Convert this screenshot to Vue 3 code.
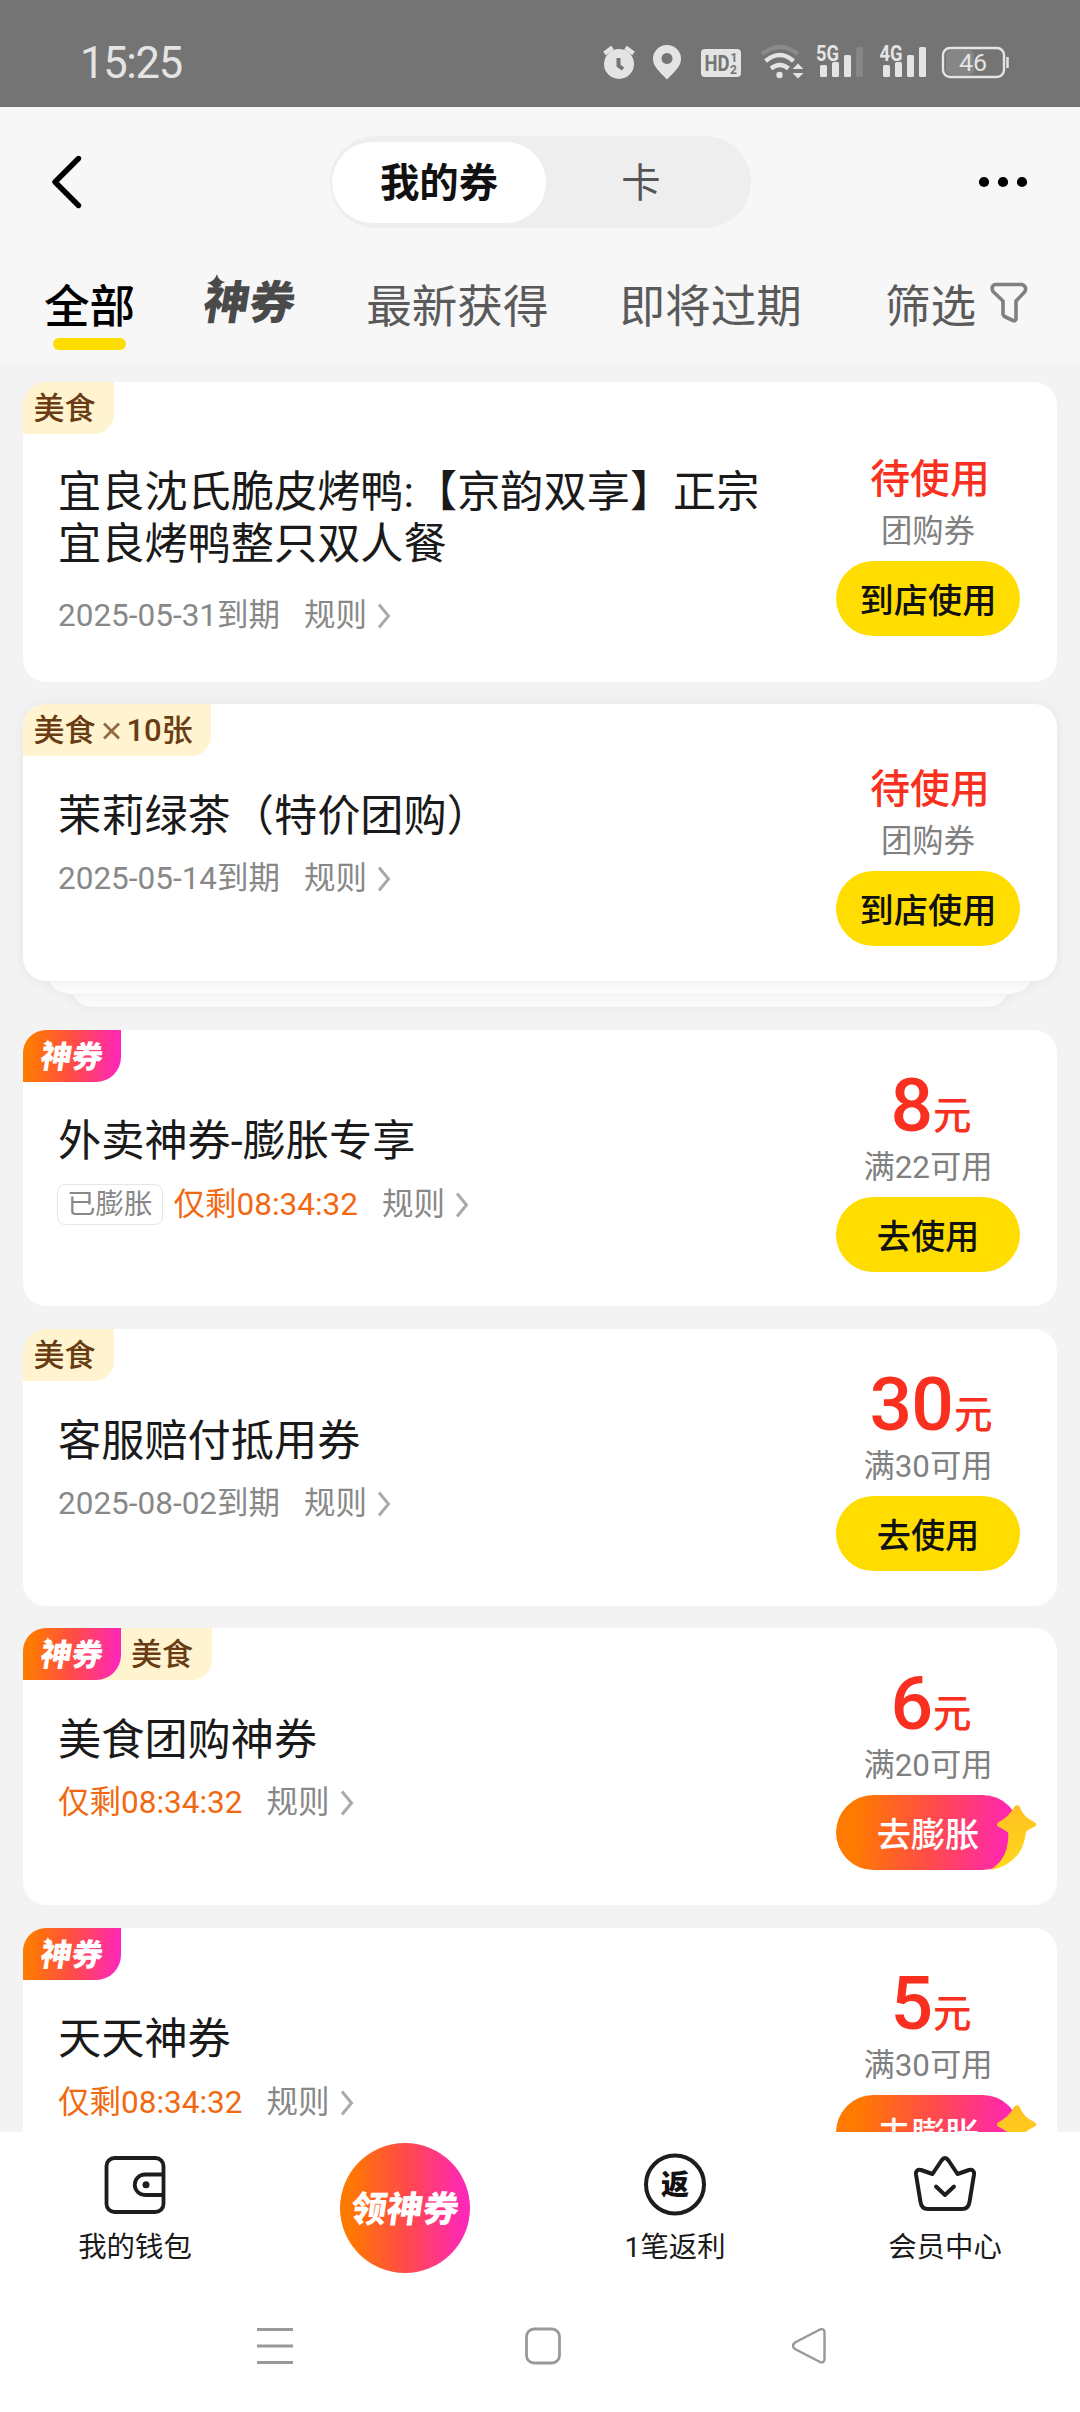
<script setup>
const coupons = [
  {
    tags: [{ text: '美食' }],
    title: '宜良沈氏脆皮烤鸭:【京韵双享】正宗宜良烤鸭整只双人餐',
    date: '2025-05-31到期',
    status: '待使用',
    note: '团购券',
    action: '到店使用',
    tall: true,
  },
  {
    tags: [{ text: '美食', count: '10张' }],
    title: '茉莉绿茶（特价团购）',
    date: '2025-05-14到期',
    status: '待使用',
    note: '团购券',
    action: '到店使用',
    stacked: true,
  },
  {
    tags: [{ brand: true }],
    title: '外卖神券-膨胀专享',
    badge: '已膨胀',
    countdown: '仅剩08:34:32',
    price: '8',
    note: '满22可用',
    action: '去使用',
  },
  {
    tags: [{ text: '美食' }],
    title: '客服赔付抵用券',
    date: '2025-08-02到期',
    price: '30',
    note: '满30可用',
    action: '去使用',
  },
  {
    tags: [{ brand: true }, { text: '美食' }],
    title: '美食团购神券',
    countdown: '仅剩08:34:32',
    price: '6',
    note: '满20可用',
    action: '去膨胀',
    boost: true,
  },
  {
    tags: [{ brand: true }],
    title: '天天神券',
    countdown: '仅剩08:34:32',
    price: '5',
    note: '满30可用',
    action: '去膨胀',
    boost: true,
  },
]
</script>

<template>
  <div class="screen">
    <div class="status">
      <span class="time">15:25</span>
      <svg class="status-icons" width="420" height="60" viewBox="600 32 420 60">
        <g fill="#e4e4e4">
          <circle cx="619" cy="64" r="15" />
          <path d="M604.500 53.500 L612.500 47.500 M633.500 53.500 L625.500 47.500" stroke="#e4e4e4" stroke-width="4.500" />
          <path d="M618.500 58 V65.500 L623 69" fill="none" stroke="#747474" stroke-width="4" />
          <path fill-rule="evenodd" d="M667 45 a14 14 0 0 1 14 14 c0 8 -8 14 -14 20.500 c-6 -6.500 -14 -12.500 -14 -20.500 a14 14 0 0 1 14 -14 Z M667 53 a5.500 5.500 0 1 0 .01 0 Z" />
          <rect x="701" y="49" width="40" height="28" rx="4" />
        </g>
        <g fill="#747474" font-weight="700">
          <text x="704.500" y="70.500" font-size="22" textLength="25" lengthAdjust="spacingAndGlyphs">HD</text>
          <text x="730.500" y="61.500" font-size="12">1</text>
          <text x="730" y="73.500" font-size="12">2</text>
        </g>
        <g fill="none" stroke-width="4.500">
          <path d="M762 54 Q780 40 798 54" stroke="#8a8a8a" />
          <path d="M765.500 61 Q780 49 793.500 61" stroke="#e4e4e4" />
          <path d="M771 68.500 Q780 61.500 788.500 68.500" stroke="#e4e4e4" />
        </g>
        <g fill="#e4e4e4">
          <circle cx="779.500" cy="75" r="3.200" />
          <path d="M792.500 69 L798 63.500 L803.500 69 Z M792.500 73 L798 78.500 L803.500 73 Z" />
          <rect x="820" y="65" width="7" height="12" rx="1.500" />
          <rect x="832" y="62" width="7" height="15" rx="1.500" />
          <rect x="844" y="55" width="7" height="22" rx="1.500" />
          <rect x="856" y="47" width="7" height="30" rx="1.500" fill="#868686" />
          <rect x="883" y="65" width="7" height="12" rx="1.500" />
          <rect x="895" y="62" width="7" height="15" rx="1.500" />
          <rect x="907" y="55" width="7" height="22" rx="1.500" />
          <rect x="919" y="47" width="7" height="30" rx="1.500" />
        </g>
        <g fill="#e4e4e4" font-weight="700" font-size="22" stroke="#747474" stroke-width="2" paint-order="stroke">
          <text x="816" y="61" textLength="23" lengthAdjust="spacingAndGlyphs">5G</text>
          <text x="879.500" y="61" textLength="23" lengthAdjust="spacingAndGlyphs">4G</text>
        </g>
        <rect x="946" y="50" width="28" height="25" rx="5" fill="#868686" />
        <rect x="943" y="48" width="61" height="29" rx="7" fill="none" stroke="#e4e4e4" stroke-width="2.400" />
        <path d="M1007.500 57 V68" stroke="#e4e4e4" stroke-width="2.500" />
        <text x="959" y="71.300" font-size="23.500" fill="#e4e4e4" textLength="28" lengthAdjust="spacingAndGlyphs">46</text>
      </svg>
    </div>

    <header class="header">
      <div class="bar">
        <svg class="back" width="36" height="60" viewBox="0 0 36 60">
          <path d="M29.500 6.500 L6 30 L29.500 53.500" fill="none" stroke="#000" stroke-width="5.400" stroke-linecap="round" stroke-linejoin="round" />
        </svg>
        <div class="segment">
          <span class="seg on">我的券</span>
          <span class="seg off">卡</span>
        </div>
        <svg class="more" width="52" height="12" viewBox="0 0 52 12">
          <circle cx="7" cy="6" r="5.100" /><circle cx="26" cy="6" r="5.100" /><circle cx="45" cy="6" r="5.100" />
        </svg>
      </div>
      <nav class="tabs">
        <span class="tab active">全部</span>
        <span class="tab brand"><i class="art">神券</i>
          <svg class="spark" width="18" height="18" viewBox="0 0 18 18"><path d="M10 0 Q11 6.500 18 8 Q11 10 9 18 Q7 11 0 9 Q8 7 10 0 Z" fill="#4a4a4a" /></svg>
        </span>
        <span class="tab">最新获得</span>
        <span class="tab expiring">即将过期</span>
        <span class="tab filter">筛选</span>
        <svg class="funnel" width="38" height="42" viewBox="0 0 38 42">
          <path d="M5 2.500 H32 Q37 4 35 9.500 L26 19 V37 Q25.500 39.500 23 38.500 L14.500 34.500 Q13 33.500 13 32 V19 L3 9.500 Q0.500 4 5 2.500 Z" fill="none" stroke="#808080" stroke-width="3.600" stroke-linejoin="round" />
        </svg>
      </nav>
    </header>

    <main class="list">
      <div v-for="(c, i) in coupons" :key="i" class="slot" :class="{ stacked: c.stacked }">
        <article class="card" :class="{ tall: c.tall }">
          <div class="tags">
            <template v-for="(t, j) in c.tags" :key="j">
              <span v-if="t.brand" class="tag-brand"><i class="art">神券</i>
                <svg class="spark" width="9" height="9" viewBox="0 0 18 18"><path d="M10 0 Q11 6.500 18 8 Q11 10 9 18 Q7 11 0 9 Q8 7 10 0 Z" fill="#fff" /></svg>
              </span>
              <span v-else class="tag" :class="{ joined: j > 0 }">{{ t.text }}<template v-if="t.count"><svg class="times" width="17" height="18" viewBox="0 0 17 18"><path d="M1 1.500 L16 16.500 M16 1.500 L1 16.500" stroke="#926b45" stroke-width="2.800" /></svg>{{ t.count }}</template></span>
            </template>
          </div>
          <div class="info">
            <h3 class="title">{{ c.title }}</h3>
            <div class="meta">
              <span v-if="c.badge" class="badge">{{ c.badge }}</span>
              <span v-if="c.date">{{ c.date }}</span>
              <span v-if="c.countdown" class="countdown">{{ c.countdown }}</span>
              <span class="rule">规则</span>
              <svg class="chev" width="14" height="28" viewBox="0 0 14 28"><path d="M2 2.500 L11.500 14 L2 25.500" fill="none" stroke="#aaa" stroke-width="3" /></svg>
            </div>
          </div>
          <div class="side">
            <div v-if="c.price" class="price"><b>{{ c.price }}</b><span>元</span></div>
            <div v-else class="state">{{ c.status }}</div>
            <div class="note">{{ c.note }}</div>
            <div class="btn" :class="{ boost: c.boost }">
              {{ c.action }}
              <svg v-if="c.boost" class="arrow" width="50" height="68" viewBox="0 0 50 68">
                <defs>
                  <linearGradient id="gold" x1="0" y1="0" x2="0" y2="1">
                    <stop offset="0" stop-color="#ffc021" /><stop offset="1" stop-color="#ffd91c" />
                  </linearGradient>
                </defs>
                <path d="M25.500 3.500 Q28 1 30.500 3.500 Q34 14 46 19.500 Q48.500 21.500 46 23.500 Q39 26.500 37 29 Q35 43 30 50 Q20 64 1 67.200 Q14 59 17.500 46 Q20 36 19 29.500 Q16 27 9 23.500 Q7 21.500 9 19.500 Q20 14 25.500 3.500 Z" fill="url(#gold)" />
              </svg>
            </div>
          </div>
        </article>
      </div>
    </main>

    <footer class="dock">
      <div class="item">
        <svg width="70" height="66" viewBox="0 0 70 66">
          <g fill="none" stroke="#1d1d1d" stroke-width="3.800">
            <rect x="6.500" y="6" width="57" height="54" rx="8" />
            <path d="M63 22.500 H45 a10 10 0 0 0 0 20.500 H63" />
          </g>
          <circle cx="46" cy="32.700" r="3.500" fill="#1d1d1d" />
        </svg>
        <span>我的钱包</span>
      </div>
      <div class="item center"><div class="orb"><i class="art">领神券</i></div></div>
      <div class="item">
        <svg width="70" height="66" viewBox="0 0 70 66">
          <circle cx="35" cy="32.500" r="29" fill="none" stroke="#1d1d1d" stroke-width="4" />
          <text x="35" y="43" text-anchor="middle" font-size="28" font-weight="900" fill="#111">返</text>
        </svg>
        <span>1笔返利</span>
      </div>
      <div class="item">
        <svg width="70" height="66" viewBox="0 0 70 66">
          <g fill="none" stroke="#1d1d1d" stroke-width="4" stroke-linejoin="round" stroke-linecap="round">
            <path d="M22.500 22 L31.500 8.500 Q35 3.500 38.500 8.500 L47.500 22 L59 18 Q64.500 17 64 22.500 L59.500 50 Q58.500 57 52 57 H18 Q11.500 57 10.500 50 L6 22.500 Q5.500 17 11 18 Z" />
            <path d="M26 34.500 L35 43 L44 34.500" />
          </g>
        </svg>
        <span>会员中心</span>
      </div>
    </footer>

    <div class="sysnav">
      <svg width="1080" height="60" viewBox="0 0 1080 60" fill="none" stroke="#999" stroke-width="2.800">
        <path d="M257 13.500 H293 M257 30 H293 M257 46.500 H293" />
        <rect x="526.500" y="13" width="33" height="34" rx="7.500" />
        <path d="M820 13.500 L795 26.500 Q791 29.700 795 33 L820 46 Q824.500 47.500 824.500 43 V16.500 Q824.500 12 820 13.500 Z" stroke-width="2.400" />
      </svg>
    </div>
  </div>
</template>

<style>
body { margin: 0; background: #fff; }
</style>

<style scoped>
.screen {
  width: 1080px;
  height: 2412px;
  overflow: hidden;
  display: flex;
  flex-direction: column;
  background: #fff;
  font-family: Roboto, "Noto Sans CJK SC", sans-serif;
  color: #1a1a1a;
}
.status {
  height: 107px;
  background: #747474;
  flex: none;
  display: flex;
  justify-content: space-between;
  align-items: center;
  padding: 17px 60px 0 80px;
  box-sizing: border-box;
}
.time { font-size: 43.5px; letter-spacing: -1.3px; color: #e4e4e4; line-height: 60px; padding-top: 3px; }
.status-icons { display: block; }
.header { height: 257px; flex: none; background: #f7f7f7; }
.bar {
  height: 92px;
  padding: 29px 51px 0 49px;
  display: flex;
  align-items: center;
}
.back { margin-right: 245px; }
.segment {
  width: 421px;
  height: 92px;
  border-radius: 46px;
  background: #eee;
  display: flex;
  align-items: center;
  padding-left: 2px;
  box-sizing: border-box;
}
.seg { height: 81px; line-height: 84px; font-size: 39.4px; text-align: center; }
.seg.on { width: 214px; border-radius: 41px; background: #fff; font-weight: 700; color: #111; }
.seg.off { width: 190px; color: #555; }
.more { margin-left: auto; }
.tabs {
  display: flex;
  align-items: flex-start;
  padding: 47px 0 0 44px;
  font-size: 45.6px;
  line-height: 66px;
  color: #5a5a5a;
}
.tab { flex: none; position: relative; }
.tab.active { color: #000; font-weight: 500; margin-right: 69px; }
.tab.active::after {
  content: "";
  position: absolute;
  left: 9px;
  top: 63px;
  width: 73px;
  height: 12px;
  border-radius: 6px;
  background: #fd0;
}
.art { display: inline-block; font-style: normal; font-weight: 900; transform: skewX(-9deg); }
.tab + .tab { margin-right: 71px; }
.tab.brand { color: #4a4a4a; width: 92px; margin: -4px 70px 0 0; }
.tab.expiring { margin-right: 83px; }
.tab.filter { margin-right: 14px; }
.spark { position: absolute; left: 3px; top: 3px; }
.funnel { margin-top: 7px; }
.list {
  height: 1768px;
  flex: none;
  overflow: hidden;
  box-sizing: border-box;
  background: #f3f3f3;
  padding: 18px 23px 0;
}
.slot { margin-bottom: 22.6px; }
.slot.stacked { position: relative; z-index: 0; padding-bottom: 26px; }
.stacked::before,
.stacked::after {
  content: "";
  position: absolute;
  border-radius: 23px;
  background: #fbfbfb;
  box-shadow: 0 0 14px rgba(0, 0, 0, 0.06);
}
.stacked::before { z-index: -1; left: 24px; right: 24px; bottom: 13px; height: 80px; }
.stacked::after { z-index: -2; left: 47px; right: 47px; bottom: 0; height: 80px; }
.card {
  height: 276.8px;
  border-radius: 23px;
  background: #fff;
  display: flex;
  justify-content: space-between;
  position: relative;
}
.card.tall { height: 299.7px; }
.stacked .card { box-shadow: 0 0 14px rgba(0, 0, 0, 0.06); }
.tags { position: absolute; left: 0; top: 0; height: 52px; display: flex; border-radius: 23px 0 0 0; overflow: hidden; }
.tag {
  height: 52px;
  line-height: 52px;
  padding: 1px 18.5px 0 10.5px;
  box-sizing: border-box;
  background: #fff4cf;
  border-radius: 0 0 20px 0;
  font-size: 31px;
  font-weight: 500;
  color: #6a3c14;
  display: flex;
  align-items: center;
}
.tag.joined { margin-left: -30px; padding-left: 40px; }
.times { margin: 0 7px 0 7px; }
.tag-brand {
  width: 98px;
  height: 52px;
  position: relative;
  z-index: 1;
  border-radius: 0 0 25px 0;
  background: linear-gradient(95deg, #ff7a00 8%, #ff4d45 50%, #ff27b8 96%);
  color: #fff;
  font-size: 31px;
  line-height: 55px;
  text-align: center;
}
.tag-brand .spark { left: 20px; top: 9px; }
.info { width: 712px; padding: 86.5px 0 0 35px; }
.tall .info { padding-top: 85px; }
.title { margin: 0; font-size: 43.2px; line-height: 52px; font-weight: 400; color: #1a1a1a; }
.meta {
  margin-top: 15.5px;
  height: 42px;
  display: flex;
  align-items: center;
  font-size: 31.5px;
  line-height: 42px;
  color: #888;
}
.tall .meta { margin-top: 24px; }
.badge {
  height: 39px;
  line-height: 40px;
  padding: 0 9px;
  margin: 0 11px 0 -1px;
  border: 1.5px solid #e6e6e6;
  border-radius: 8px;
  font-size: 28.5px;
}
.countdown { color: #f26810; }
.rule { margin-left: 24px; }
.chev { margin-left: 10px; }
.side { width: 184px; margin-right: 37px; padding-top: 55px; text-align: center; }
.tall .side { padding-top: 66.5px; }
.state, .price { height: 60px; line-height: 60px; color: #f92f20; font-size: 39.8px; font-weight: 500; white-space: nowrap; }
.state { padding-left: 4px; line-height: 62px; }
.price { display: flex; justify-content: center; align-items: baseline; position: relative; top: -2px; left: 3px; }
.price b { font-size: 75px; font-weight: 500; line-height: 44px; letter-spacing: -1px; }
.price span { font-size: 38.5px; line-height: 40px; position: relative; top: -2px; margin-left: 1px; }
.note { margin-top: 2px; height: 40px; line-height: 41px; font-size: 31.3px; color: #808080; white-space: nowrap; }
.btn {
  margin-top: 10px;
  height: 75px;
  line-height: 80px;
  border-radius: 38px;
  background: #fd0;
  color: #111;
  font-size: 34.2px;
  font-weight: 500;
  position: relative;
}
.btn.boost { background: linear-gradient(95deg, #ff7a00 12%, #ff4d45 50%, #ff27b0 92%); color: #fff; }
.arrow { position: absolute; left: 153px; top: 8px; }
.dock { height: 148px; flex: none; background: #fff; display: flex; }
.item {
  width: 270px;
  padding-top: 20px;
  display: flex;
  flex-direction: column;
  align-items: center;
  font-size: 28.4px;
  line-height: 40px;
  color: #1a1a1a;
}
.item span { margin-top: 10px; }
.item.center { padding-top: 10.5px; }
.orb {
  width: 130px;
  height: 130px;
  border-radius: 50%;
  background: linear-gradient(90deg, #ff7800 8%, #ff4b48 50%, #ff27b8 96%);
  color: #fff;
  font-size: 36px;
  line-height: 134px;
  text-align: center;
}
.orb .art { transform: skewX(-8deg); white-space: nowrap; }
.sysnav { height: 132px; padding-top: 36px; box-sizing: border-box; }
.sysnav svg { display: block; }
</style>
